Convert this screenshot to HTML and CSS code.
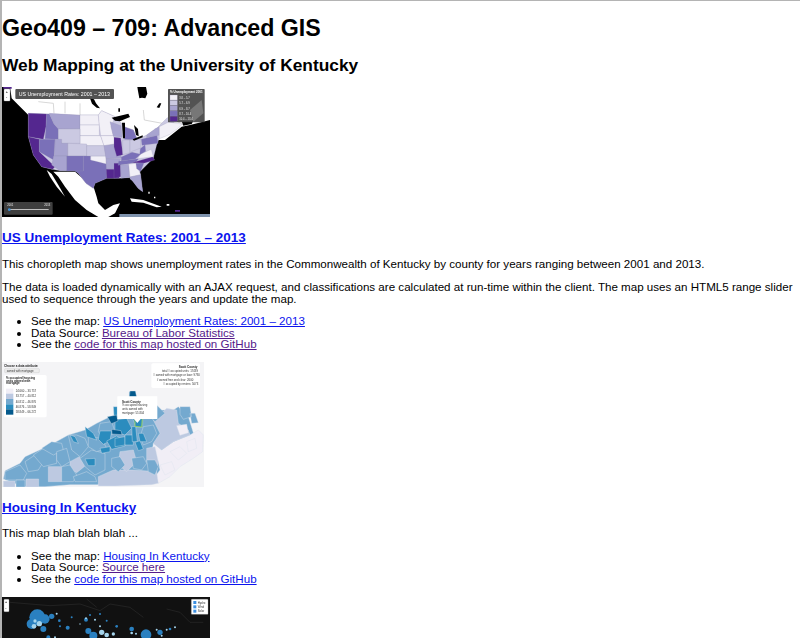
FILE: index.html
```html
<!DOCTYPE html>
<html lang="en">
<head>
<meta charset="utf-8">
<title>Geo409 – 709: Advanced GIS</title>
<link rel="stylesheet" href="styles.css">
</head>
<body>
<h1>Geo409 – 709: Advanced GIS</h1>
<h2>Web Mapping at the University of Kentucky</h2>

<svg class="thumb thumb-us" viewBox="6 21 624 390" role="img" aria-label="US unemployment map">
  <rect class="ink" x="6" y="21" width="624" height="390"/>
  <g class="snow">
    <path d="M30 21H630V120L570 135 545 140 495 180 400 180 300 105 85 105 55 75 35 55z"/>
    <path d="M160 275L225 275 282 325 290 350 295 370 315 390 340 375 360 370 345 400 325 411H295L260 390 225 360 195 320 175 290z"/>
    <path d="M140 270L150 290 170 320 195 350 175 315 155 282z"/>
    <path d="M390 355L430 360 485 380 470 382 430 368 395 365z"/>
    <path d="M445 335h4v6h-4zM462 350h4v5h-4zM500 372h8v5h-8z"/>
  </g>
  <path class="lines" d="M115 65l45 5 2 30M195 65v35M240 70v35M430 90l3 30 65 12 25-12M525 120l25 15"/>
  <path class="s5" d="M10 21h25v5h-25zM525 390h15v5h-15z"/>
  <g class="states">
    <path class="s1" d="M85 100L240 105 295 105 305 92 345 110 365 130 372 140 400 150 412 178 440 165 470 145 500 115 525 100 520 135 480 170 470 195 460 235 420 275 428 335 415 325 390 293 360 295 320 295 285 310 280 325 258 310 235 280 225 272 180 272 155 268 125 260 100 225 85 170z"/>
    <path class="s5" d="M85 100l55 2 -2 38-8 38-45-8z"/>
    <path class="s5" d="M85 170l33 8 0 37 47 45-7 8-33-8-25-35z"/>
    <path class="s3" d="M140 102l8 0 14 30 13 14 0 32-40-2 3-36z"/>
    <path class="s2" d="M148 100l92 6 0 40-65 1-13-15z"/>
    <path class="s0" d="M240 105l55 0 3 30-58 0z"/>
    <path class="s0" d="M240 135l58 0 0 32-58 0z"/>
    <path class="s0" d="M240 167l62 0 10 30-52 0-20-3z"/>
    <path class="s1" d="M175 147l65 0 0 43-55 0-10-12z"/>
    <path class="s1" d="M203 190l57 2 0 36-57 0z"/>
    <path class="s2" d="M165 178l20 0 0 12 18 0 0 38-40 0z"/>
    <path class="s3" d="M118 178l47 0-4 62-43-25z"/>
    <path class="s2" d="M161 228l39 0 0 44-20 0-25-17z"/>
    <path class="s3" d="M200 228l50 0 0 45-50 0z"/>
    <path class="s3" d="M250 228L272 228 272 240 319 245 322 269 320 295 285 310 280 325 258 310 235 280 225 273 250 273z"/>
    <path class="s0" d="M272 228l46 0 1 24-47-12z"/>
    <path class="s1" d="M260 197l52 0 6 31-58 0z"/>
    <path class="s0" d="M295 105l10-13 40 18-12 30 7 27-38 0-4-32z"/>
    <path class="s0" d="M302 167l38 0 8 24-36 6z"/>
    <path class="s2" d="M312 197l38-5 15 42-47 2z"/>
    <path class="s2" d="M318 236l44 0-10 32-33 0z"/>
    <path class="s5" d="M319 268l33 0 6 27-38 0z"/>
    <path class="s5" d="M342 250l20 0 0 40-20 5z"/>
    <path class="s5" d="M342 172l20 2 7 50-19 5-8-28z"/>
    <path class="s2" d="M330 125l33 12 3 35-26-4z"/>
    <path class="s3" d="M372 140l28 10 12 30-38-2z"/>
    <path class="s1" d="M368 180l22 0 0 38-22 6z"/>
    <path class="s1" d="M390 180l32-2 0 26-26 10-6 4z"/>
    <path class="s3" d="M364 231l32-14 26 6-16 14-42 6z"/>
    <path class="s3" d="M356 244l60-8-10 12-52 8z"/>
    <path class="s2" d="M361 255l25-2 3 38-25 4z"/>
    <path class="s0" d="M386 252l22-2 14 34-32 7z"/>
    <path class="s3" d="M408 250l24-2-10 26-12-8z"/>
    <path class="s5" d="M396 248l62-18 6 10-30 9z"/>
    <path class="s0" d="M422 222l32-14 6 22-48 6z"/>
    <path class="s3" d="M421 206l14-12 2 20-18 10z"/>
    <path class="s3" d="M424 178l47-12 3 24-48 6z"/>
    <path class="s2" d="M440 165l28-20 10-5 2 25-40 8z"/>
    <path class="s0" d="M478 140l28-14 40 6-8 10-30 22-30 12z"/>
    <path class="s2" d="M390 291l32-7 6 51-14-10-16-22-8-6z"/>
  </g>
  <g class="ink">
    <path d="M412 21h26l4 20-6 14-10-2-8 2-4-22z"/>
    <path d="M270 55l12 3 6 12 12 15-10-2-14-12z"/>
    <path d="M355 85h5v10h-5z"/>
    <path d="M470 82l8-12 6 0-6 14z"/>
    <path d="M335 113l50-12 5 10-20 8-10 5-15-2z"/>
    <path d="M366 128l9 0 0 47-6 0z"/>
    <path d="M402 135l12 12 2 22-8-4z"/>
    <path d="M398 178l30-12 0 6-26 10z"/>
    <path d="M545 124l35-2-5 10-25 5z"/>
  </g>
  <rect class="panel" x="46" y="27" width="296" height="30" rx="3"/>
  <text class="tt" x="56" y="47">US Unemployment Rates: 2001 – 2013</text>
  <rect class="ctrl" x="12" y="27" width="18" height="36" rx="2"/>
  <text class="ctrl-t" x="17" y="38">+</text>
  <text class="ctrl-t" x="18" y="55">-</text>
  <rect class="panel" x="504" y="27" width="110" height="100" rx="2"/>
  <path class="mottle" d="M570 90l35-30 5 40-30 25z"/>
  <text class="lg-t" x="510" y="38">% Unemployment 2001</text>
  <g class="states">
    <rect class="s0" x="510" y="45" width="22" height="15"/>
    <rect class="s1" x="510" y="61" width="22" height="15"/>
    <rect class="s2" x="510" y="77" width="22" height="15"/>
    <rect class="s3" x="510" y="93" width="22" height="15"/>
    <rect class="s5" x="510" y="109" width="22" height="15"/>
  </g>
  <text class="lg" x="538" y="57">3.8 – 5.7</text>
  <text class="lg" x="538" y="73">5.7 – 6.9</text>
  <text class="lg" x="538" y="89">6.9 – 8.7</text>
  <text class="lg" x="538" y="105">8.7 – 10.4</text>
  <text class="lg" x="538" y="121">10.4 – 13.4</text>
  <rect class="panel" x="12" y="366" width="146" height="38" rx="3"/>
  <text class="lg" x="22" y="379">2001</text>
  <text class="lg" x="133" y="379">2013</text>
  <rect class="snow" x="24" y="388" width="122" height="2"/>
  <circle class="knob" cx="28" cy="389" r="4"/>
  <rect class="attrib" x="358" y="402" width="272" height="9"/>
</svg>

<h3><a class="fresh" href="#us">US Unemployment Rates: 2001 – 2013</a></h3>
<p>This choropleth map shows unemployment rates in the Commonwealth of Kentucky by county for years ranging between 2001 and 2013.</p>
<p>The data is loaded dynamically with an AJAX request, and classifications are calculated at run-time within the client. The map uses an HTML5 range slider used to sequence through the years and update the map.</p>
<ul>
  <li>See the map: <a class="fresh" href="#us">US Unemployment Rates: 2001 – 2013</a></li>
  <li>Data Source: <a class="seen" href="#bls">Bureau of Labor Statistics</a></li>
  <li>See the <a class="seen" href="#gh">code for this map hosted on GitHub</a></li>
</ul>

<svg class="thumb thumb-ky" viewBox="6 21 606 375" role="img" aria-label="Kentucky housing map">
  <rect class="paper" x="6" y="21" width="606" height="375"/>
  <g class="county">
    <path class="k2" d="M10 372l5-25 45-22 15-20 55-25 30-15 45-25 50-15 35-20 40-20 40-5 45-15 30-10 30 10 45 0 15-10 30 30 20 65-2 40-28 20-40 25-30 30-35 20-160 4-80 0-75 6-65 0z"/>
    <path class="k0" d="M460 265L485 285 520 260 570 240 595 225 610 240 608 290 580 310 540 335 510 365 475 385 465 365 480 345 475 320 455 300z"/>
    <path class="k0" d="M510 290l30-15 20 20-25 20zM480 330l35-10 10 25-30 15zM560 260l25-10 5 30-25 10z"/>
    <path class="k1" d="M460 195L500 160 530 165 535 205 565 225 570 240 520 260 485 285 460 265 480 235z"/>
    <path class="k2" d="M540 155l30 0 5 30-25 8-10-15zM570 175l15 0 10 28-20 2z"/>
    <path class="k0" d="M530 212l30-4 5 25-25 8z"/>
    <path class="k1" d="M10 378l35 0 0 18-35 0zM78 372l38 0 0 24-38 0z"/>
    <path class="k1" d="M295 365l45-20 60 0 70 5 5 35-20 4-110 4-50 0z"/>
    <path class="k1" d="M440 280l25-5 10 45-5 30-20-10-10-20z"/>
    <path class="k1" d="M210 320l28-15 17 28-25 20-20-10z"/>
    <path class="k1" d="M145 335l40 0 0 45-40 0z"/>
    <path class="k1" d="M360 290l40-5 10 35-30 30-25-20z"/>
    <path class="k2" d="M75 320l30-20 25 20-15 25-30 5z"/>
    <path class="k2" d="M15 350l45-20 20 25-10 20-55 0z"/>
    <path class="k2" d="M48 375l27 0 0 21-27 0z"/>
    <path class="k2" d="M100 300l30-20 40 5 0 40-40 10z"/>
    <path class="k2" d="M125 280l30-20 30 5 5 20-30 15z"/>
    <path class="k2" d="M170 290l30-10 10 40-25 15-15-20z"/>
    <path class="k2" d="M185 335l25-5 20 30-10 20-35 0z"/>
    <path class="k2" d="M205 240l25 0 25 10 10 25-25 30-25-20z"/>
    <path class="k2" d="M240 310l35-25 40 10 0 50-30 15-30-25z"/>
    <path class="k2" d="M220 365l40-15 25 15 5 15-65 0z"/>
    <path class="k2" d="M265 245l40 5 15 30-30 10-25-15z"/>
    <path class="k2" d="M300 205l35-5 10 30-30 25-20-25z"/>
    <path class="k2" d="M335 310l25-5 15 25-20 20-20-15z"/>
    <path class="k2" d="M395 310l35-5 10 20-15 20-25-5z"/>
    <path class="k2" d="M440 315l25 0 10 20-10 25-20-10z"/>
    <path class="k2" d="M430 215l30-5 10 25-15 25-25 10-10-25z"/>
    <path class="k2" d="M440 150l30 0 25 25-30 25-25-25z"/>
    <path class="k3" d="M345 195l35-5 15 30-20 20-30-10z"/>
    <path class="k3" d="M300 228l35 0-5 30-20 10-15-15z"/>
    <path class="k3" d="M320 258l30-15 25 15 0 15-40 10z"/>
    <path class="k3" d="M300 280l30-5 0 15-25 5z"/>
    <path class="k3" d="M345 250l30-5 0 25-30 5z"/>
    <path class="k3" d="M375 240l25 0 0 30-25 0z"/>
    <path class="k3" d="M395 215l12 0 5 45-15 0z"/>
    <path class="k3" d="M405 262l15-5 10 25-15 5z"/>
    <path class="k3" d="M415 235l15 0 10 25-20 0z"/>
    <path class="k3" d="M255 215l25 20 10 20-30-10z"/>
    <path class="k3" d="M210 240l15 5 10 20-15-5z"/>
    <path class="k3" d="M255 312l30-2 0 22-20 0z"/>
    <path class="k3" d="M340 155l12 0 0 30-10 0z"/>
    <path class="k3" d="M388 110l18 0 5 30-25 0z"/>
    <path class="k4" d="M322 185l28-5 4 18-20 8z"/>
    <path class="k4" d="M335 223l28 4 3 12-30-2z"/>
    <path class="k4" d="M390 108l16 0 4 18-22 0z"/>
    <path class="k3" d="M398 190l30 0 0 27-20 0z"/>
    <path class="sel" d="M405 188l22 2-2 26-20-2z"/>
  </g>
  <g class="card">
    <rect x="12" y="60" width="128" height="127" rx="5"/>
    <rect x="454" y="25" width="146" height="74" rx="5"/>
    <path d="M352 124h120v68h-50l-10 12-10-12h-50z"/>
  </g>
  <text class="k-b" x="12" y="35">Choose a data attribute:</text>
  <rect class="sel-box" x="14" y="41" width="104" height="12" rx="2"/>
  <text class="k-s" x="20" y="50">owned with mortgage</text>
  <text class="k-b" x="18" y="72">% occupied housing</text>
  <text class="k-b" x="18" y="80">units owned with</text>
  <text class="k-b" x="18" y="88">mortgage</text>
  <rect class="k0" x="18" y="101" width="22" height="15"/>
  <rect class="k1" x="18" y="116" width="22" height="16"/>
  <rect class="k2" x="18" y="132" width="22" height="16"/>
  <rect class="k3" x="18" y="148" width="22" height="15"/>
  <rect class="k4" x="18" y="163" width="22" height="16"/>
  <text class="k-s" x="47" y="111">24.660 – 33.757</text>
  <text class="k-s" x="47" y="127">33.757 – 40.812</text>
  <text class="k-s" x="47" y="143">40.812 – 46.876</text>
  <text class="k-s" x="47" y="158">46.876 – 58.849</text>
  <text class="k-s" x="47" y="174">58.849 – 66.272</text>
  <text class="k-b" x="536" y="38">Scott County</text>
  <text class="k-s" x="486" y="52">total # occupied units: 17439</text>
  <text class="k-s" x="460" y="64"># owned with mortgage or loan: 9730</text>
  <text class="k-s" x="470" y="77"># owned free and clear: 2600</text>
  <text class="k-s" x="490" y="90"># occupied by renters: 5073</text>
  <text class="k-b" x="366" y="143">Scott County</text>
  <text class="k-s" x="366" y="154">% occupied housing</text>
  <text class="k-s" x="366" y="165">units owned with</text>
  <text class="k-s" x="366" y="177">mortgage: 55.804</text>
</svg>

<h3 class="after-ky"><a class="fresh" href="#ky">Housing In Kentucky</a></h3>
<p class="blah">This map blah blah blah ...</p>
<ul>
  <li>See the map: <a class="fresh" href="#ky">Housing In Kentucky</a></li>
  <li>Data Source: <a class="seen" href="#src">Source here</a></li>
  <li>See the <a class="fresh" href="#gh2">code for this map hosted on GitHub</a></li>
</ul>

<svg class="thumb thumb-pts" viewBox="6 24 624 123" role="img" aria-label="Dark point map">
  <rect class="night" x="6" y="24" width="624" height="123"/>
  <path class="faint" d="M30 40l120 10 90-5 60 20 30-20 60 10 40 30M500 60l40 10 30 30 40 0M260 30l30 25"/>
  <g class="b1">
    <circle cx="112" cy="85" r="24"/><circle cx="135" cy="90" r="14"/><circle cx="155" cy="82" r="8"/>
    <circle cx="95" cy="105" r="15"/><circle cx="130" cy="120" r="9"/><circle cx="203" cy="116" r="6"/>
    <circle cx="265" cy="126" r="9"/><circle cx="280" cy="140" r="12"/><circle cx="438" cy="137" r="16"/>
    <circle cx="178" cy="95" r="4"/><circle cx="215" cy="85" r="3"/><circle cx="258" cy="92" r="6"/>
    <circle cx="350" cy="112" r="4"/><circle cx="395" cy="120" r="7"/><circle cx="480" cy="130" r="8"/>
    <circle cx="180" cy="112" r="3"/><circle cx="320" cy="95" r="3"/><circle cx="510" cy="120" r="4"/>
    <circle cx="300" cy="75" r="3"/><circle cx="270" cy="78" r="3"/><circle cx="145" cy="145" r="6"/>
  </g>
  <g class="b2">
    <circle cx="102" cy="112" r="7"/><circle cx="118" cy="104" r="8"/><circle cx="105" cy="96" r="5"/>
    <circle cx="170" cy="74" r="3"/><circle cx="285" cy="92" r="3"/><circle cx="258" cy="88" r="3"/>
    <circle cx="305" cy="130" r="8"/><circle cx="320" cy="138" r="7"/><circle cx="340" cy="135" r="5"/>
    <circle cx="395" cy="132" r="4"/><circle cx="408" cy="134" r="3"/><circle cx="470" cy="122" r="3"/>
    <circle cx="500" cy="122" r="3"/><circle cx="525" cy="115" r="3"/><circle cx="300" cy="112" r="3"/>
    <circle cx="240" cy="105" r="2"/><circle cx="165" cy="145" r="3"/><circle cx="485" cy="140" r="3"/>
  </g>
  <rect class="ctrl" x="12" y="31" width="15" height="37" rx="2"/>
  <text class="ctrl-t" x="15" y="42">+</text>
  <text class="ctrl-t" x="16" y="60">-</text>
  <rect class="ctrl" x="574" y="31" width="50" height="45" rx="2"/>
  <rect class="b-key" x="580" y="36" width="9" height="9"/>
  <rect class="b-key" x="580" y="49" width="9" height="9"/>
  <rect class="b-key" x="580" y="62" width="9" height="9"/>
  <text class="k-s" x="593" y="44">Hydro</text>
  <text class="k-s" x="593" y="57">Wind</text>
  <text class="k-s" x="593" y="70">Solar</text>
</svg>
</body>
</html>
```
FILE: styles.css
```css
html {
  background: #fff;
  border-top: 1px solid #b4b4b4;
  border-left: 2px solid #b4b4b4;
}
body {
  margin: 0;
  font-family: "Liberation Sans", Arial, sans-serif;
  font-size: 11.6px;
  line-height: 11.4px;
  color: #000;
}
h1 {
  font-size: 23.2px;
  line-height: 26px;
  margin: 0;
  padding-top: 14px;
}
h2 {
  font-size: 17.35px;
  line-height: 20px;
  margin: 13.5px 0 0;
}
h3 {
  font-size: 13.5px;
  line-height: 15px;
  margin: 13px 0 0;
}
p { margin: 11.6px 0 0; }
h3 + p { margin-top: 13.4px; }
h3 + p.blah { margin-top: 12.5px; }
ul { margin: 11px 0 0; padding-left: 29px; }
a.fresh { color: #0b14ee; }
a.seen { color: #551a8b; }
.thumb { display: block; filter: blur(0.45px); }
.thumb-us { width: 208px; height: 130px; margin-top: 12.5px; }
.thumb-ky { width: 202px; height: 125px; margin-top: 12.4px; }
.thumb-pts { width: 208px; height: 41px; margin-top: 13px; }
.ink { fill: #000; }
.snow { fill: #fff; }
.lines { fill: none; stroke: #c4c4c4; stroke-width: 2; }
.states path, .states rect { stroke: #8f8bb0; stroke-width: 0.7; }
.s0 { fill: #f2f0f7; }
.s1 { fill: #cbc9e2; }
.s2 { fill: #a8a4d0; }
.s3 { fill: #7a70b8; }
.s5 { fill: #54278f; }
.panel { fill: #444; fill-opacity: .92; }
.mottle { fill: #777; }
.tt { fill: #fff; font-size: 15.8px; }
.ctrl { fill: #fff; stroke: #aaa; }
.ctrl-t { fill: #333; font-size: 11px; font-weight: 700; }
.lg-t { fill: #fff; font-size: 9px; font-weight: 700; }
.lg { fill: #eee; font-size: 8px; }
.knob { fill: #3b8fd6; }
.attrib { fill: #7f93ad; }
.paper { fill: #f4f4f6; }
.county path { stroke: #dbe3ee; stroke-width: 1.2; }
.k0 { fill: #f1eef6; }
.k1 { fill: #bdc9e1; }
.k2 { fill: #74a9cf; }
.k3 { fill: #2b8cbe; }
.k4 { fill: #045a8d; }
.county .sel { fill: #2b8cbe; stroke: #a6d854; stroke-width: 2.5; }
.card rect, .card path { fill: #fff; }
.k-b { font-size: 9px; font-weight: 700; fill: #222; }
.k-s { font-size: 8.5px; fill: #333; }
.sel-box { fill: #eee; stroke: #bbb; }
.night { fill: #111; }
.faint { fill: none; stroke: #2a2a2a; stroke-width: 2; }
.b1 circle { fill: #2a80c0; }
.b2 circle { fill: #a5d4ec; }
.b-key { fill: #3d8fe0; }
```
